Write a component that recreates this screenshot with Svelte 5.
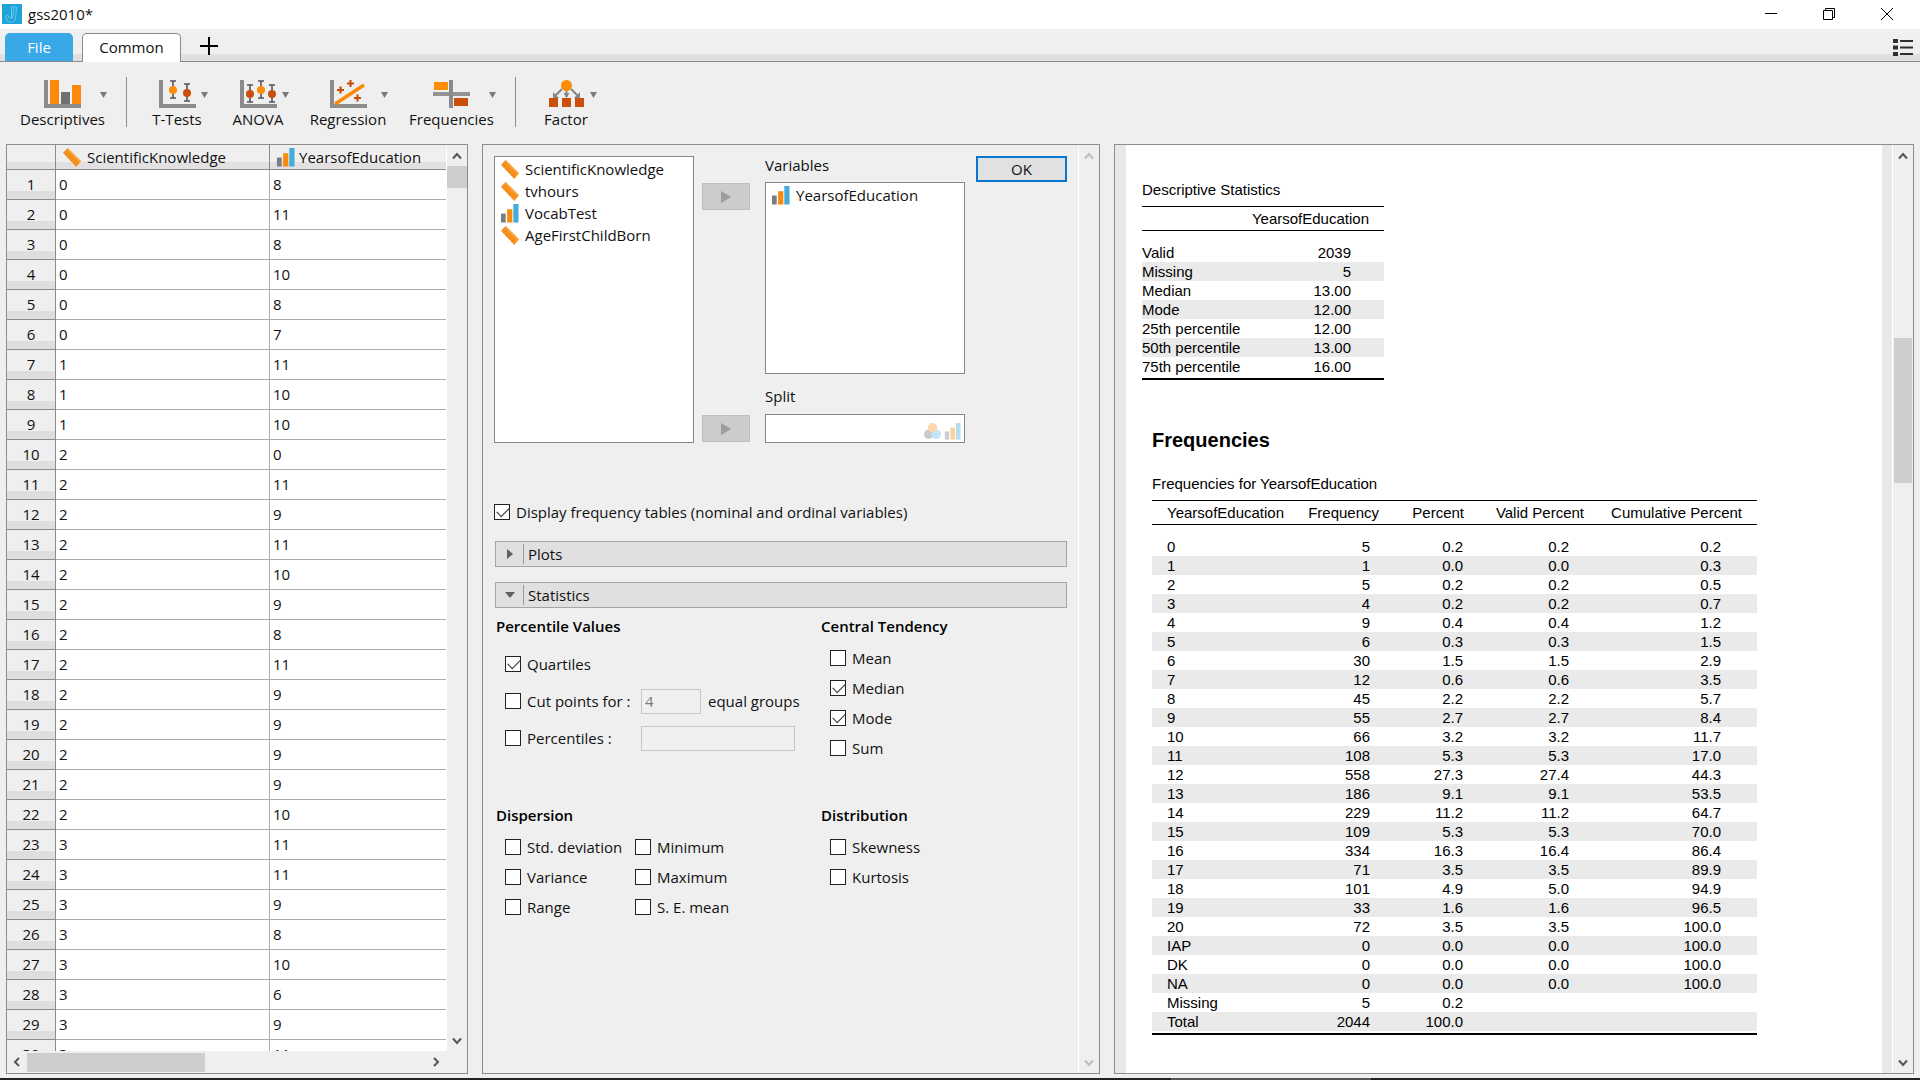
<script>
  const tools = [
    { name: 'Descriptives', icon: 'bars', size: 'wide' },
    { sep: true },
    { name: 'T-Tests', icon: 'ttest' },
    { name: 'ANOVA', icon: 'anova' },
    { name: 'Regression', icon: 'regression', size: 'medium' },
    { name: 'Frequencies', icon: 'frequencies', size: 'wide' },
    { sep: true },
    { name: 'Factor', icon: 'factor' }
  ];

  const sheet = [
    [0, 8], [0, 11], [0, 8], [0, 10], [0, 8], [0, 7], [1, 11], [1, 10], [1, 10], [2, 0],
    [2, 11], [2, 9], [2, 11], [2, 10], [2, 9], [2, 8], [2, 11], [2, 9], [2, 9], [2, 9],
    [2, 9], [2, 10], [3, 11], [3, 11], [3, 9], [3, 8], [3, 10], [3, 6], [3, 9], [3, 11]
  ];

  const available = [
    ['ScientificKnowledge', 'scale'],
    ['tvhours', 'scale'],
    ['VocabTest', 'ordinal'],
    ['AgeFirstChildBorn', 'scale']
  ];

  const descriptives = [
    ['Valid', '2039'], ['Missing', '5'], ['Median', '13.00'], ['Mode', '12.00'],
    ['25th percentile', '12.00'], ['50th percentile', '13.00'], ['75th percentile', '16.00']
  ];

  const frequencies = [
    ['0', '5', '0.2', '0.2', '0.2'],
    ['1', '1', '0.0', '0.0', '0.3'],
    ['2', '5', '0.2', '0.2', '0.5'],
    ['3', '4', '0.2', '0.2', '0.7'],
    ['4', '9', '0.4', '0.4', '1.2'],
    ['5', '6', '0.3', '0.3', '1.5'],
    ['6', '30', '1.5', '1.5', '2.9'],
    ['7', '12', '0.6', '0.6', '3.5'],
    ['8', '45', '2.2', '2.2', '5.7'],
    ['9', '55', '2.7', '2.7', '8.4'],
    ['10', '66', '3.2', '3.2', '11.7'],
    ['11', '108', '5.3', '5.3', '17.0'],
    ['12', '558', '27.3', '27.4', '44.3'],
    ['13', '186', '9.1', '9.1', '53.5'],
    ['14', '229', '11.2', '11.2', '64.7'],
    ['15', '109', '5.3', '5.3', '70.0'],
    ['16', '334', '16.3', '16.4', '86.4'],
    ['17', '71', '3.5', '3.5', '89.9'],
    ['18', '101', '4.9', '5.0', '94.9'],
    ['19', '33', '1.6', '1.6', '96.5'],
    ['20', '72', '3.5', '3.5', '100.0'],
    ['IAP', '0', '0.0', '0.0', '100.0'],
    ['DK', '0', '0.0', '0.0', '100.0'],
    ['NA', '0', '0.0', '0.0', '100.0'],
    ['Missing', '5', '0.2', '', ''],
    ['Total', '2044', '100.0', '', '']
  ];

  let checks = $state({
    tables: true, quartiles: true, cut: false, percentiles: false,
    mean: false, median: true, mode: true, sum: false,
    sd: false, variance: false, range: false, minimum: false, maximum: false, se: false,
    skewness: false, kurtosis: false
  });
</script>

{#snippet typeIcon(kind)}
  {#if kind === 'scale'}
    <svg class="type" viewBox="0 0 20 20" aria-hidden="true">
      <path d="M1 5 6 0l14 14-5 6z" fill="#f6921e" />
      <path d="M6 0l14 14-1 1L5 1z" fill="#fba94c" />
      <path d="M3.5 7.5l2-2M6.5 10.500l2-2M9.500 13.500l2-2M12.500 16.500l2-2" stroke="#d9730d" stroke-width=".8" />
    </svg>
  {:else}
    <svg class="type" viewBox="0 0 20 20" aria-hidden="true">
      <path d="M1 10h5v9.500H1z" fill="#7d7e82" />
      <path d="M7.500 5.500H13v14H7.500z" fill="#f98b0c" />
      <path d="M14 0h5.500v19.500H14z" fill="#45acd9" />
    </svg>
  {/if}
{/snippet}

{#snippet ibeam(x, y, fill)}
  <path d="M{x - 3} {y}h6M{x - 3} {y + 17}h6M{x} {y}v17" stroke="#55565a" stroke-width="1.600" fill="none" />
  <circle cx={x} cy={y + 9} r="4" {fill} />
{/snippet}

{#snippet toolIcon(kind)}
  <svg class="tool-icon" viewBox="0 0 37 28" aria-hidden="true">
    {#if kind === 'frequencies'}
      <path d="M0 12h37v4H0z" fill="#939393" />
      <path d="M16 0h4v28h-4z" fill="#8a8a8a" />
      <path d="M1 2h14v8H1z" fill="#ff8c05" />
      <path d="M21 18h14v8H21z" fill="#c9500c" />
    {:else if kind === 'factor'}
      <path d="M14 9 7 16M18.500 9v8M23 9l7 7" stroke="#85868a" stroke-width="2" fill="none" />
      <path d="M5 12v6h6zM15.500 13h6l-3 5zM32 12v6h-6z" fill="#85868a" />
      <circle cx="18.500" cy="5.500" r="5.500" fill="#ff8c05" />
      <path d="M1 18h9v9H1zM14 18h9v9h-9zM27 18h9v9h-9z" fill="#c9500c" />
    {:else}
      <path d="M0 0h4v24h33v4H0z" fill="#8c8c8c" />
      {#if kind === 'bars'}
        <path d="M6 0h9v24H6zM28 5h9v19h-9z" fill="#fb8a0a" />
        <path d="M17 12h9v12h-9z" fill="#6f7074" />
      {:else if kind === 'ttest'}
        {@render ibeam(14, 1, '#ff8c05')}
        {@render ibeam(28, 4, '#c9500c')}
      {:else if kind === 'anova'}
        {@render ibeam(10, 5, '#c9500c')}
        {@render ibeam(21, 1, '#ff8c05')}
        {@render ibeam(32, 5, '#c9500c')}
      {:else}
        <path d="M5 24 34 5" stroke="#fb8a0a" stroke-width="3.500" />
        <path d="M7 10h7M10.500 6.500v7M17 3.500h7M20.500 0v7M24 18h7M27.500 14.500v7" stroke="#c9500c" stroke-width="2.200" />
      {/if}
    {/if}
  </svg>
{/snippet}

{#snippet arrow(dir, label, disabled)}
  <button class="arrow" type="button" aria-label={label} {disabled}>
    <svg viewBox="0 0 10 10" aria-hidden="true">
      <path
        d={{ up: 'M1 7.500 5 3l4 4.500', down: 'M1 2.500 5 7l4-4.500', left: 'M7 1 3 5l4 4', right: 'M3 1l4 4-4 4' }[dir]}
        fill="none" stroke="currentColor" stroke-width="2"
      />
    </svg>
  </button>
{/snippet}

{#snippet check(key, label)}
  <label class="check"><input type="checkbox" bind:checked={checks[key]} /><span>{label}</span></label>
{/snippet}

<div class="app">
  <header class="title">
    <svg class="logo" viewBox="0 0 20 20" aria-hidden="true">
      <path d="M0 0h20v20H0z" fill="#1ea3da" />
      <path d="M9.500 3h5l-1 12c-.300 3-5.500 4-8 2l-2-4 2-2 2 3c1 1 2 .500 2-1z" fill="none" stroke="#6cc9ec" />
      <path d="M12 4 10.500 15" stroke="#6cc9ec" fill="none" />
    </svg>
    <span>gss2010*</span>
    <div class="window-buttons">
      <button type="button" aria-label="Minimize"><svg viewBox="0 0 12 12"><path d="M0 5.500h12" /></svg></button>
      <button type="button" aria-label="Restore"><svg viewBox="0 0 12 12"><path d="M.5 2.500h9v9h-9zM2.500 2.500v-2h9v9h-2" /></svg></button>
      <button type="button" aria-label="Close"><svg viewBox="0 0 12 12"><path d="M0 0l12 12M12 0 0 12" /></svg></button>
    </div>
  </header>

  <nav class="tabs">
    <button class="tab file" type="button">File</button>
    <button class="tab common" type="button">Common</button>
    <button class="plus" type="button" aria-label="Add module">
      <svg viewBox="0 0 18 18"><path d="M0 9h18M9 0v18" stroke="#000" stroke-width="2" /></svg>
    </button>
    <button class="menu" type="button" aria-label="Options">
      <svg viewBox="0 0 20 17">
        <path d="M0 0h5v4H0zM0 6.500h5v4H0zM0 13h5v4H0zM7 1h13v2H7zM7 7.500h13v2H7zM7 14h13v2H7z" fill="#2f2f2f" />
      </svg>
    </button>
  </nav>

  <div class="toolbar">
    {#each tools as tool}
      {#if tool.sep}
        <span class="sep"></span>
      {:else}
        <button class={['tool', tool.size]} type="button">
          <span></span>
          {@render toolIcon(tool.icon)}
          <svg class="caret" viewBox="0 0 7 6" aria-hidden="true"><path d="M0 0h7L3.500 6z" fill="#7a7a7a" /></svg>
          <span class="tool-name">{tool.name}</span>
        </button>
      {/if}
    {/each}
  </div>

  <main>
    <section class="panel data" aria-label="Data">
      <div class="sheet">
        <table>
          <colgroup><col class="c-num" /><col class="c-first" /><col class="c-second" /></colgroup>
          <thead>
            <tr>
              <th></th>
              <th><div class="head">{@render typeIcon('scale')}ScientificKnowledge</div></th>
              <th><div class="head tight">{@render typeIcon('ordinal')}YearsofEducation</div></th>
            </tr>
          </thead>
          <tbody>
            {#each sheet as [a, b], i}
              <tr><th scope="row">{i + 1}</th><td>{a}</td><td>{b}</td></tr>
            {/each}
          </tbody>
        </table>
      </div>
      <div class="vbar">
        {@render arrow('up', 'Scroll up')}
        <div class="track"><div class="thumb data-v"></div></div>
        {@render arrow('down', 'Scroll down')}
      </div>
      <div class="hbar">
        {@render arrow('left', 'Scroll left')}
        <div class="track"><div class="thumb data-h"></div></div>
        {@render arrow('right', 'Scroll right')}
      </div>
    </section>

    <section class="panel options" aria-label="Analysis options">
      <form onsubmit={(e) => e.preventDefault()}>
        <div class="assign">
          <ul class="box all">
            {#each available as [name, kind]}
              <li>{@render typeIcon(kind)}{name}</li>
            {/each}
          </ul>
          <button class="move first" type="button" disabled aria-label="Move to Variables">
            <svg viewBox="0 0 10 12"><path d="M0 0l10 6-10 6z" fill="#9c9c9c" /></svg>
          </button>
          <button class="move second" type="button" disabled aria-label="Move to Split">
            <svg viewBox="0 0 10 12"><path d="M0 0l10 6-10 6z" fill="#9c9c9c" /></svg>
          </button>
          <span class="label-vars">Variables</span>
          <ul class="box vars"><li>{@render typeIcon('ordinal')}YearsofEducation</li></ul>
          <span class="label-split">Split</span>
          <div class="box split">
            <svg class="nominal" viewBox="0 0 18 18" aria-hidden="true">
              <circle cx="5" cy="12" r="5" fill="#7d7e82" />
              <circle cx="13" cy="12" r="5" fill="#67c1e8" />
              <circle cx="9" cy="5" r="5" fill="#fb9a2e" />
            </svg>
            {@render typeIcon('ordinal')}
          </div>
          <button class="ok" type="submit">OK</button>
        </div>

        <div class="tables-row">{@render check('tables', 'Display frequency tables (nominal and ordinal variables)')}</div>

        <div class="folds">
          <button class="fold" type="button" aria-expanded="false">
            <svg viewBox="0 0 10 10" aria-hidden="true"><path d="M2 0v10l6-5z" fill="#606060" /></svg><span>Plots</span>
          </button>
          <button class="fold" type="button" aria-expanded="true">
            <svg viewBox="0 0 10 10" aria-hidden="true"><path d="M0 2h10L5 8z" fill="#606060" /></svg><span>Statistics</span>
          </button>
        </div>

        <div class="groups">
          <fieldset class="loose">
            <legend>Percentile Values</legend>
            <div class="row">{@render check('quartiles', 'Quartiles')}</div>
            <div class="row">
              <div class="lead">{@render check('cut', 'Cut points for :')}</div>
              <input class="short" type="text" value="4" disabled aria-label="Number of equal groups" />
              <span class="unit">equal groups</span>
            </div>
            <div class="row">
              <div class="lead">{@render check('percentiles', 'Percentiles :')}</div>
              <input class="long" type="text" disabled aria-label="Percentile values" />
            </div>
          </fieldset>
          <fieldset>
            <legend>Central Tendency</legend>
            {@render check('mean', 'Mean')}
            {@render check('median', 'Median')}
            {@render check('mode', 'Mode')}
            {@render check('sum', 'Sum')}
          </fieldset>
          <fieldset>
            <legend>Dispersion</legend>
            <div class="pair">
              {@render check('sd', 'Std. deviation')}
              {@render check('minimum', 'Minimum')}
              {@render check('variance', 'Variance')}
              {@render check('maximum', 'Maximum')}
              {@render check('range', 'Range')}
              {@render check('se', 'S. E. mean')}
            </div>
          </fieldset>
          <fieldset>
            <legend>Distribution</legend>
            {@render check('skewness', 'Skewness')}
            {@render check('kurtosis', 'Kurtosis')}
          </fieldset>
        </div>
      </form>
      <div class="vbar">
        {@render arrow('up', 'Scroll up', true)}
        <div class="track"></div>
        {@render arrow('down', 'Scroll down', true)}
      </div>
    </section>

    <section class="panel results" aria-label="Results">
      <div class="page">
        <table class="report desc">
          <caption>Descriptive Statistics</caption>
          <colgroup><col class="d1" /><col /></colgroup>
          <thead><tr><th></th><th>YearsofEducation</th></tr></thead>
          <tbody>
            {#each descriptives as [name, value]}
              <tr><td>{name}</td><td>{value}</td></tr>
            {/each}
          </tbody>
        </table>
        <h2>Frequencies</h2>
        <table class="report freq">
          <caption>Frequencies for YearsofEducation</caption>
          <colgroup><col class="f1" /><col class="f2" /><col class="f3" /><col class="f4" /><col class="f5" /></colgroup>
          <thead>
            <tr><th>YearsofEducation</th><th>Frequency</th><th>Percent</th><th>Valid Percent</th><th>Cumulative Percent</th></tr>
          </thead>
          <tbody>
            {#each frequencies as row}
              <tr>{#each row as cell}<td>{cell}</td>{/each}</tr>
            {/each}
          </tbody>
        </table>
      </div>
      <div class="vbar">
        {@render arrow('up', 'Scroll up')}
        <div class="track"><div class="thumb results-v"></div></div>
        {@render arrow('down', 'Scroll down')}
      </div>
    </section>
  </main>
  <div class="edge"><div></div></div>
</div>

<style>
  :global(body) { background: #efefef; }
  .app, .app * { box-sizing: border-box; }
  .app {
    display: flex;
    flex-direction: column;
    height: 100vh;
    overflow: hidden;
    font: 15px/20px "Open Sans", "Noto Sans", sans-serif;
    color: #111;
  }
  button, input { font: inherit; color: inherit; }
  button { border: 0; padding: 0; background: none; }
  svg { display: block; flex: none; }

  .title { display: flex; align-items: center; gap: 6px; height: 29px; padding: 0 0 2px 2px; background: #fff; flex: none; }
  .logo { width: 20px; height: 20px; }
  .window-buttons { display: flex; margin-left: auto; padding-right: 4px; }
  .window-buttons button { width: 58px; height: 27px; display: grid; place-items: center; }
  .window-buttons svg { width: 12px; height: 12px; fill: none; stroke: #000; }

  .tabs {
    display: flex;
    align-items: flex-end;
    height: 33px;
    flex: none;
    padding: 0 7px 0 5px;
    border-bottom: 1px solid #8a8a8a;
    background: linear-gradient(#efefef 0 25px, #e0dede 25px);
  }
  .tab { height: 28px; border-radius: 5px 5px 0 0; }
  .file { width: 68px; background: #38a8e6; color: #fff; margin-right: 9px; }
  .common { width: 99px; height: 29px; margin-bottom: -1px; padding-bottom: 2px; background: #fff; border: 1px solid #8a8a8a; border-bottom: 0; }
  .plus { margin: 0 0 6px 19px; }
  .plus svg { width: 18px; height: 18px; }
  .menu { margin: 0 0 5px auto; }
  .menu svg { width: 20px; height: 17px; }

  .toolbar { display: flex; align-items: flex-start; gap: 19px; height: 82px; flex: none; padding: 15px 18px 0; }
  .sep { width: 1px; height: 50px; background: #8e8e8e; }
  .tool { display: grid; grid-template-columns: 1fr 37px 1fr; width: 62px; padding-top: 3px; }
  .tool.medium { width: 80px; }
  .tool.wide { width: 89px; }
  .tool-icon { width: 37px; height: 28px; }
  .caret { width: 7px; height: 6px; margin-top: 2px; justify-self: end; align-self: center; }
  .tool-name { grid-column: 1 / -1; margin-top: 1px; text-align: center; white-space: nowrap; }

  main { display: grid; grid-template-columns: 462px 618px minmax(0, 1fr); grid-template-rows: minmax(0, 1fr); gap: 14px; flex: 1; min-height: 0; padding: 0 6px 4px; }
  .panel { border: 1px solid #8c8c8c; min-width: 0; min-height: 0; }

  .arrow { width: 20px; height: 21px; display: grid; place-items: center; color: #555; flex: none; }
  .arrow:disabled { color: #bdbdbd; }
  .arrow svg { width: 10px; height: 10px; }
  .vbar { display: flex; flex-direction: column; width: 21px; background: #efefef; border-left: 1px solid #fff; }
  .hbar { display: flex; align-items: center; grid-column: 1 / -1; background: #efefef; }
  .track { flex: 1; min-height: 0; }
  .thumb { background: #cdcdcd; }
  .data-v { height: 22px; }
  .data-h { width: 178px; height: 19px; }
  .results-v { height: 145px; margin: 172px 1px 0; }

  .data { display: grid; grid-template-columns: minmax(0, 1fr) 21px; grid-template-rows: minmax(0, 1fr) 22px; }
  .data .hbar { padding-right: 21px; }
  .sheet { overflow: hidden; background: #fff; }
  .sheet table { width: 100%; table-layout: fixed; border-collapse: separate; border-spacing: 0; }
  .c-num { width: 49px; }
  .c-first { width: 214px; }
  .sheet th, .sheet td { height: 30px; padding: 0 0 2px 3px; font-weight: 400; text-align: left; border: 0 solid #acacac; border-width: 0 1px 1px 0; }
  .sheet tr > :last-child { border-right: 0; }
  .sheet thead th { height: 25px; padding-bottom: 0; border-color: #8c8c8c; background: linear-gradient(#efefef 0 17px, #e2e0e0 17px); }
  .sheet tbody th { padding-left: 0; text-align: center; border-color: #8c8c8c; background: linear-gradient(#efefef 0 21px, #dfdddd 21px); }
  .head { display: flex; align-items: center; gap: 6px; padding-left: 3px; }
  .head.tight { gap: 4px; }
  .type { width: 19px; height: 19px; }

  .options { display: flex; }
  form { flex: 1; padding: 11px 11px 0; min-width: 0; }
  .assign {
    display: grid;
    grid-template-columns: 208px 63px 211px 91px;
    grid-template-rows: 26px 192px 40px 29px;
  }
  .box { margin: 0; padding: 3px 5px; list-style: none; background: #fff; border: 1px solid #85868a; }
  .box li { display: flex; align-items: center; gap: 6px; height: 22px; }
  .box.all { grid-area: 1 / 1 / 5 / 2; margin-right: 8px; padding-top: 1px; }
  .move { grid-column: 2; width: 48px; height: 27px; display: grid; place-items: center; background: #cccccc; border: 1px solid #bfbfbf; }
  .move svg { width: 10px; height: 12px; }
  .first { grid-row: 2; margin-top: 1px; }
  .second { grid-row: 4; margin-top: 1px; }
  .label-vars { grid-area: 1 / 3; line-height: 18px; }
  .box.vars { grid-area: 2 / 3; margin-right: 11px; padding-top: 1px; }
  .label-split { grid-area: 3 / 3; align-self: center; padding-top: 4px; }
  .box.split { grid-area: 4 / 3; margin-right: 11px; display: flex; align-items: flex-end; justify-content: flex-end; gap: 3px; padding: 0 3px 2px; }
  .split svg { width: 17px; height: 17px; opacity: .4; }
  .ok { grid-area: 1 / 4; background: #e1e1e1; border: 2px solid #0b74cc; }

  .check { display: flex; align-items: center; gap: 6px; height: 30px; white-space: nowrap; }
  .check input { appearance: none; width: 16px; height: 16px; margin: 0; background: #fff; border: 1px solid #222; flex: none; }
  .check input:checked::after {
    content: "";
    display: block;
    width: 11px;
    height: 6px;
    margin: 2px 0 0 2px;
    border: solid #333;
    border-width: 0 0 1px 1px;
    rotate: -45deg;
  }
  .tables-row { margin: 54px 0 14px; }
  .folds { display: grid; gap: 15px; padding-left: 1px; }
  .fold { display: flex; align-items: center; height: 26px; padding-left: 9px; background: #e0e0e0; border: 1px solid #a5a5a5; text-align: left; }
  .fold svg { width: 10px; height: 10px; }
  .fold span { margin-left: 8px; padding-left: 4px; border-left: 1px solid #9a9a9a; }
  .groups { display: grid; grid-template-columns: 325px minmax(0, 1fr); row-gap: 42px; margin-top: 8px; padding-left: 2px; }
  fieldset { border: 0; margin: 0; padding: 0 0 0 9px; min-width: 0; }
  legend { margin: 0 0 7px -9px; padding: 0; font-weight: 600; color: #000; }
  .loose legend { margin-bottom: 13px; }
  .row { display: flex; align-items: center; height: 30px; margin-bottom: 7px; white-space: nowrap; }
  .row:last-child { margin-bottom: 0; }
  .unit { margin-left: 7px; }
  .row .lead { width: 136px; }
  .row input[type="text"] { height: 25px; padding: 0 3px; background: #f0f0f0; border: 1px solid #c6c6c6; color: #7a7a7a; }
  .row .short { width: 60px; }
  .row .long { width: 154px; }
  .pair { display: grid; grid-template-columns: 130px 1fr; }

  .results { display: grid; grid-template-columns: minmax(0, 1fr) 21px; background: #e8e8e8; }
  .page { margin: 0 10px 0 11px; padding: 35px 16px 0; background: #fff; overflow: hidden; font-family: "Liberation Sans", Arial, sans-serif; color: #000; }
  .report { border-collapse: separate; border-spacing: 0; table-layout: fixed; line-height: 19px; border-bottom: 2px solid #000; }
  .report caption { text-align: left; line-height: 20px; padding-bottom: 6px; }
  .report th { height: 25px; padding: 0; font-weight: 400; text-align: right; border: solid #000; border-width: 1px 0; white-space: nowrap; }
  .report td { height: 19px; padding: 0; text-align: right; white-space: nowrap; }
  .report tbody tr:nth-child(even) { background: #eaeaea; }
  .report tbody::before { content: ""; display: table-row; height: 12px; }
  .report tbody::after { content: ""; display: table-row; height: 2px; }
  .report td:first-child { text-align: left; }
  .desc { width: 242px; }
  .d1 { width: 106px; }
  .desc th { padding-right: 15px; }
  .desc td:last-child { padding-right: 33px; }
  h2 { margin: 48px 0 22px 10px; font-size: 20px; line-height: 24px; }
  .freq { width: 605px; margin-left: 10px; }
  .f1 { width: 143px; }
  .f2 { width: 99px; }
  .f3 { width: 90px; }
  .f4 { width: 115px; }
  .freq th { padding-right: 15px; }
  .freq th:first-child { text-align: left; padding: 0 0 0 15px; }
  .freq th:nth-child(3) { padding-right: 20px; }
  .freq td:first-child { padding-left: 15px; }
  .freq td:nth-child(2) { padding-right: 24px; }
  .freq td:nth-child(3) { padding-right: 21px; }
  .freq td:nth-child(4) { padding-right: 30px; }
  .freq td:nth-child(5) { padding-right: 36px; }

  .edge { height: 2px; flex: none; background: #222; }
  .edge div { width: 200px; height: 2px; margin-left: 61%; background: #555; }
</style>
